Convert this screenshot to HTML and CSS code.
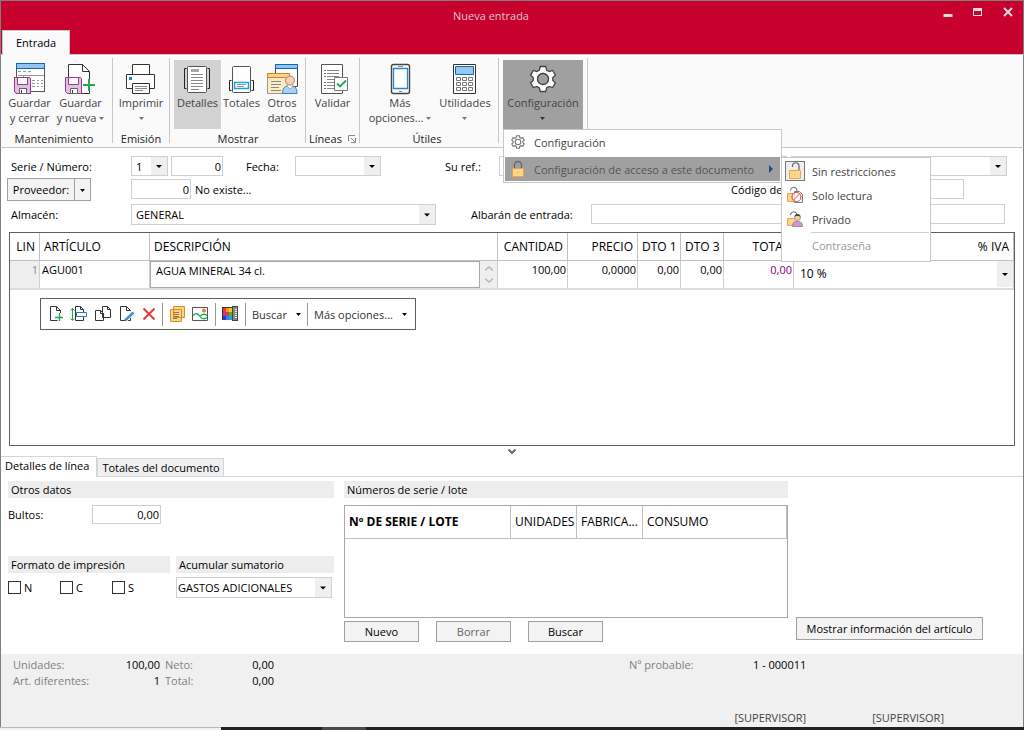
FILE: index.html
```html
<!DOCTYPE html>
<html lang="es">
<head>
<meta charset="utf-8">
<title>Nueva entrada</title>
<link rel="stylesheet" href="styles.css">
</head>
<body>
<svg class="defs" aria-hidden="true">
  <symbol id="disk" viewBox="0 0 17 17"><path d="M.5.5h15l1 1v15H2.5l-2-2z" fill="#e2bfdf" stroke="#943c93"/><path d="M3.5.5h10v7h-10z" fill="#fff" stroke="#943c93"/><path d="M5.500 11.500h7v5h-7z" fill="#fff" stroke="#666"/><path d="M7 13h1v3H7z" fill="#444"/></symbol>
  <symbol id="caret" viewBox="0 0 5 3"><path d="M0 0h5L2.500 3z" fill="currentColor"/></symbol>
  <symbol id="gear" viewBox="0 0 32 32"><path d="M13.300 3.500h5.400l.9 3.600 2.600 1.500 3.500-1.100 2.700 4.600-2.600 2.500v2.800l2.600 2.500-2.700 4.600-3.500-1.100-2.600 1.500-.9 3.600h-5.400l-.9-3.600-2.600-1.500-3.500 1.100-2.700-4.600 2.600-2.500v-2.800l-2.600-2.500 2.700-4.600 3.500 1.100 2.600-1.500z"/><circle cx="16" cy="16" r="5.500"/></symbol>
  <symbol id="lock" viewBox="0 0 16 18"><path d="M4.500 9V5a3.500 3.500 0 0 1 7 0V9" fill="none" stroke="#666" stroke-width="1.300"/><path d="M2.500 8.500h11v8h-11z" fill="#f8d98c" stroke="#eda04e"/><path d="M7.500 12h1v1h-1z" fill="#eda04e"/></symbol>
</svg>
<header class="titlebar">
  <h1 class="title">Nueva entrada</h1>
  <div class="tabs-top"><button class="tab-top">Entrada</button></div>
  <div class="winbuttons">
    <button class="winbtn" aria-label="Minimizar"><svg width="10" height="10"><path d="M.5 7h9v3h-9z" fill="#ddd"/></svg></button>
    <button class="winbtn" aria-label="Maximizar"><svg width="10" height="10" fill="none" stroke="#ddd" shape-rendering="crispEdges"><path d="M.5 1.500h8v7h-8zM0 2.500h9M0 3.500h9"/></svg></button>
    <button class="winbtn" aria-label="Cerrar"><svg width="10" height="10"><path d="M1 1l8 8M9 1L1 9" stroke="#ddd" stroke-width="2"/></svg></button>
  </div>
</header>

<nav class="ribbon" aria-label="Cinta">
  <section class="group">
    <div class="tools">
      <button class="tool w-save"><svg class="ico" viewBox="0 0 32 32" shape-rendering="crispEdges"><path d="M2.500.5h28v28h-28z" fill="#fff" stroke="#555"/><path d="M2.500.5h28v5h-28z" fill="#8fc5ee" stroke="#1467b0"/><path d="M4 8.500h3M9 8.500h3M14 8.500h3M4 12.500h26M18 17.500h3M23 17.500h2M27 17.500h2M18 20.500h3M23 20.500h2M27 20.500h2M18 23.500h3M23 23.500h2M27 23.500h2M9.500 12v3" stroke="#999" fill="none"/><use href="#disk" y="14" width="17" height="17"/></svg><span>Guardar<br>y cerrar</span></button>
      <button class="tool w-new"><svg class="ico" viewBox="0 0 32 32"><path d="M3.500 18V1.500h14l7 7V30.500H3.500" fill="#fff" stroke="#333"/><path d="M17.500 1.500v7h7" fill="none" stroke="#333"/><use href="#disk" y="14" width="17" height="17"/><path d="M18 22h12M24 16v12" stroke="#fafafa" stroke-width="5"/><path d="M18 22h12M24 16v12" stroke="#1fa950" stroke-width="2"/></svg><span>Guardar<br>y nueva <svg class="caret"><use href="#caret"/></svg></span></button>
    </div>
    <h2 class="glabel">Mantenimiento</h2>
  </section>
  <section class="group g-print">
    <div class="tools">
      <button class="tool w-print"><svg class="ico" viewBox="0 0 32 32" fill="#fff" stroke="#333"><path d="M7.500 13V1.500h17V13"/><path d="M1.500 11.500h28v14h-28z"/><path d="M4 14h3v3H4z" fill="#1883d0" stroke="none"/><path d="M7.500 20.500h17v10h-17z"/><path d="M10 23.500h12M10 25.500h12M10 27.500h8" stroke="#888"/></svg><span>Imprimir<br><svg class="caret"><use href="#caret"/></svg></span></button>
    </div>
    <h2 class="glabel">Emisión</h2>
  </section>
  <section class="group">
    <div class="tools">
      <button class="tool w-det pressed"><svg class="ico" viewBox="0 0 32 32" fill="none" stroke="#333"><path d="M4.500 5.500h-2v20h2M25.500 5.500h2v20h-2" stroke="#222"/><rect x="5.500" y="3.500" width="19" height="26" rx="1" fill="#fff" stroke="#555"/><path d="M9 6h8v3H9z" fill="#aaa" stroke="none"/><path d="M9 11.500h12M9 14.500h12M9 17.500h12M9 20.500h12M9 23.500h12M9 26.500h8" stroke="#888"/></svg><span>Detalles</span></button>
      <button class="tool w-tot"><svg class="ico" viewBox="0 0 32 32" fill="none"><path d="M5.500 17.500h-2v10h2M25.500 17.500h2v10h-2" stroke="#222"/><rect x="6.500" y="3.500" width="18" height="26" rx="1" fill="#fff" stroke="#555"/><path d="M8.500 19.500h14v6h-14z" fill="#fff" stroke="#18a0dc" stroke-width="1.500"/><path d="M11 21.500h9M11 23.500h7" stroke="#999"/></svg><span>Totales</span></button>
      <button class="tool w-oth"><svg class="ico" viewBox="0 0 32 32"><path d="M9.500 1.500h22v22h-22z" fill="#fff" stroke="#444"/><path d="M9.500 1.500h22v4h-22z" fill="#8fc5ee" stroke="#1467b0"/><path d="M1.500 10.500h22v20h-22z" fill="#fbecc4" stroke="#999"/><path d="M1.500 10.500h22v4h-22z" fill="#f9d48c" stroke="#e07c1f"/><path d="M5 18.500h10M5 21.500h10M5 24.500h8M5 27.500h10" stroke="#888"/><path d="M16.500 30.500c0-6 3-8 7.500-8s7 2 7 8z" fill="#a8d2ef" stroke="#3a7fb8"/><path d="M21 23l3 3 3-3-1-2h-4z" fill="#fff" stroke="#777" stroke-width=".6"/><circle cx="24" cy="17.500" r="4.500" fill="#f6d2b4" stroke="#b9805c"/></svg><span>Otros<br>datos</span></button>
    </div>
    <h2 class="glabel">Mostrar</h2>
  </section>
  <section class="group g-lines">
    <div class="tools">
      <button class="tool w-val"><svg class="ico" viewBox="0 0 32 32" fill="none"><path d="M4.500 1.500h21v29h-21z" fill="#fff" stroke="#555"/><path d="M10 7.500h12M10 10.500h12M10 13.500h12M10 16.500h8M10 19.500h7M10 22.500h7M10 25.500h7" stroke="#888"/><path d="M7 7.500h2M7 13.500h2M7 22.500h2" stroke="#1fa950"/><path d="M7 10.500h2M7 19.500h2M7 25.500h2" stroke="#e04040"/><path d="M17.500 14.500h13v13h-13z" fill="#fff" stroke="#777"/><path d="M20 20.500l3 3 6-6" stroke="#1fa950" stroke-width="1.800"/></svg><span>Validar</span></button>
    </div>
    <h2 class="glabel lines">Líneas <button class="launcher" aria-label="Más líneas"><svg width="8" height="8" fill="none" stroke="#888"><path d="M.5 6V.5H7M3 3l4 4M7.500 3v4.500H3"/></svg></button></h2>
  </section>
  <section class="group">
    <div class="tools">
      <button class="tool w-more"><svg class="ico" viewBox="0 0 32 32" fill="none"><rect x="7.500" y="1.500" width="18" height="29" rx="2" fill="#fff" stroke="#444" stroke-width="1.400"/><path d="M9.500 5.500h14v20h-14z" stroke="#2b86c8" stroke-width="1.300"/><path d="M14 3.500h5M15 28.500h3" stroke="#888"/></svg><span>Más<br>opciones... <svg class="caret"><use href="#caret"/></svg></span></button>
      <button class="tool w-util"><svg class="ico" viewBox="0 0 32 32" fill="none"><path d="M4.500 1.500h22v29h-22z" fill="#fff" stroke="#333"/><path d="M6.500 3.500h18v8h-18z" fill="#94c8ee" stroke="#1467b0"/><path d="M7.500 14.500h4v3h-4zM13.500 14.500h4v3h-4zM19.500 14.500h4v3h-4zM7.500 19.500h4v3h-4zM13.500 19.500h4v3h-4zM19.500 19.500h4v3h-4zM7.500 24.500h4v3h-4zM13.500 24.500h4v3h-4zM19.500 24.500h4v3h-4z" stroke="#777"/></svg><span>Utilidades<br><svg class="caret"><use href="#caret"/></svg></span></button>
    </div>
    <h2 class="glabel">Útiles</h2>
  </section>
  <section class="group g-conf">
    <div class="tools">
      <button class="tool w-conf open" aria-haspopup="menu"><svg class="ico" fill="#fff" stroke="#444" stroke-width="1.300"><use href="#gear"/><circle cx="16" cy="16" r="5.500" fill="#a0a0a0"/></svg><span>Configuración<br><svg class="caret"><use href="#caret"/></svg></span></button>
      <div class="menu" role="menu">
        <button class="mitem" role="menuitem"><svg class="mico" fill="none" stroke="#777" stroke-width="2.200"><use href="#gear"/></svg>Configuración</button>
        <div class="msub">
          <button class="mitem current" role="menuitem"><svg class="mico"><use href="#lock"/></svg>Configuración de acceso a este documento<svg class="marrow" width="4" height="8"><path d="M0 0l4 4-4 4z" fill="#1a4a8c"/></svg></button>
          <div class="submenu" role="menu">
            <button class="sitem" role="menuitem"><span class="sico chosen"><svg width="16" height="18"><path d="M5.500 5V4a3.200 3.200 0 0 1 6.500 0v5" fill="none" stroke="#666" stroke-width="1.200"/><path d="M2.500 8.500h11v8h-11z" fill="#f8d98c" stroke="#eda04e"/><path d="M7.500 12h1v1h-1z" fill="#eda04e"/></svg></span>Sin restricciones</button>
            <button class="sitem" role="menuitem"><span class="sico"><svg width="18" height="18"><path d="M4.500 4.500a3.200 3.200 0 0 1 6.500 0V8" fill="none" stroke="#666"/><path d="M1.500 7.500h9v8h-9z" fill="#f8d98c" stroke="#eda04e"/><path d="M8.500 5.500h5l3 3v8h-8z" fill="#fff" stroke="#777"/><circle cx="10.500" cy="11" r="4.500" fill="#fff" fill-opacity=".8" stroke="#d9534a" stroke-width="1.200"/><path d="M7.500 14l6-6" stroke="#d9534a"/></svg></span>Solo lectura</button>
            <button class="sitem" role="menuitem"><span class="sico"><svg width="18" height="18"><path d="M4.500 5a3.200 3.200 0 0 1 6.500 0v3" fill="none" stroke="#666"/><path d="M1.500 8.500h10v7h-10z" fill="#f8d98c" stroke="#eda04e"/><path d="M6.500 16.500c0-4 2-5 5-5s5 1 5 5z" fill="#c99bcb" stroke="#9a6a9e" stroke-width=".8"/><circle cx="11.500" cy="7.500" r="3" fill="#f3c9ab" stroke="#a97"/><path d="M8.500 7c0-4 6-4 6 0l-1.500-1h-3z" fill="#444"/></svg></span>Privado</button>
            <button class="sitem off" role="menuitem" disabled>Contraseña</button>
          </div>
        </div>
      </div>
    </div>
  </section>
</nav>

<main>
  <form class="form">
    <div class="row">
      <label class="first" for="serie">Serie / Número:</label>
      <select id="serie" class="field w-serie"><option>1</option></select>
      <input id="numero" class="field num w-numero" aria-label="Número" value="0">
      <label class="l-fecha" for="fecha">Fecha:</label>
      <select id="fecha" class="field w-fecha"><option></option></select>
      <label class="l-ref" for="ref">Su ref.:</label>
      <input id="ref" class="field w-ref">
      <select class="field w-rest" aria-label="Estado"><option></option></select>
    </div>
    <div class="row">
      <div class="first"><div class="split"><button type="button" class="btn">Proveedor:</button><button type="button" class="btn splitdrop" aria-label="Elegir"><svg class="caret dark"><use href="#caret"/></svg></button></div></div>
      <input class="field num w-prov" aria-label="Proveedor" value="0">
      <span class="noexiste">No existe...</span>
      <label class="l-cod" for="cod">Código de</label>
      <input id="cod" class="field w-cod">
    </div>
    <div class="row">
      <label class="first" for="alm">Almacén:</label>
      <select id="alm" class="field w-alm"><option>GENERAL</option></select>
      <label class="l-alb" for="alb">Albarán de entrada:</label>
      <input id="alb" class="field grow">
    </div>
  </form>

  <div class="gridbox">
    <table class="grid">
      <colgroup><col class="c30"><col class="c110"><col><col class="c70"><col class="c70"><col class="c43"><col class="c43"><col class="c70"><col class="c220"></colgroup>
      <thead><tr><th class="r">LIN</th><th>ARTÍCULO</th><th>DESCRIPCIÓN</th><th class="r">CANTIDAD</th><th class="r">PRECIO</th><th class="r">DTO 1</th><th class="r">DTO 3</th><th class="r">TOTAL</th><th class="r">% IVA</th></tr></thead>
      <tbody><tr>
        <td class="r lin">1</td><td>AGU001</td>
        <td class="desc"><div class="descbox"><input aria-label="Descripción" value="AGUA MINERAL 34 cl."><div class="spin"><svg width="8" height="5" fill="none" stroke="#b8b8b8" stroke-width="1.500"><path d="M0 4.500L4 1l4 3.500"/></svg><svg width="8" height="5" fill="none" stroke="#b8b8b8" stroke-width="1.500"><path d="M0 .5L4 4 8 .5"/></svg></div></div></td>
        <td class="r">100,00</td><td class="r">0,0000</td><td class="r">0,00</td><td class="r">0,00</td><td class="r total">0,00</td>
        <td class="iva"><select aria-label="% IVA"><option>10 %</option></select></td>
      </tr></tbody>
    </table>
    <div class="toolbar">
      <button class="tb" aria-label="Nueva"><svg width="16" height="18" fill="#fff" stroke="#333"><path d="M2.500 1.500h6l4 4v10h-10zM8.500 1.500v4h4"/><path d="M7 12h9M11.500 8v9" stroke="#fff" stroke-width="4"/><path d="M7 12.500h8M11.500 8v8" stroke="#1fa950" stroke-width="1.300"/></svg></button>
      <button class="tb" aria-label="Insertar"><svg width="18" height="18" fill="#fff" stroke="#333"><path d="M5.500 1.500h5l3 3v11h-8zM10.500 1.500v3h3"/><path d="M6.500 7.500h10v4h-10z" stroke="#2b78c0"/><path d="M2.500 3v12M.5 5.500l2-2 2 2M.5 13.500l2 2 2-2" fill="none" stroke="#1fa950"/></svg></button>
      <button class="tb" aria-label="Copiar"><svg width="18" height="18" fill="#fff" stroke="#333"><path d="M8.500 1.500h5l3 3v8h-8zM13.500 1.500v3h3M1.500 5.500h5l3 3v7h-8zM6.500 5.500v3h3"/></svg></button>
      <button class="tb" aria-label="Editar"><svg width="18" height="18" fill="#fff" stroke="#333"><path d="M2.500 1.500h6l4 4v10h-10zM8.500 1.500v4h4"/><path d="M7 15l8-8" stroke="#fff" stroke-width="5"/><path d="M7 15.500l8.500-8" stroke="#3b8fd4" stroke-width="2.500"/></svg></button>
      <button class="tb" aria-label="Borrar línea"><svg width="14" height="18"><path d="M1.500 3.500l11 11M12.500 3.500l-11 11" stroke="#e83a3a" stroke-width="2"/></svg></button>
      <i class="tsep"></i>
      <button class="tb" aria-label="Notas"><svg width="17" height="18" fill="#f9d48c" stroke="#e08a2c"><path d="M4.500 1.500h11v11h-11zM1.500 4.500h11v12h-11z"/><path d="M4 7.500h6M4 9.500h6M4 11.500h6M4 13.500h4" stroke="#957a45"/></svg></button>
      <button class="tb" aria-label="Imagen"><svg width="17" height="18" fill="#fff" stroke="#555"><path d="M.5 2.500h15v13H.5z"/><path d="M1 10.500c3-3 5-2 7 1s4 3 7 1M8 11.500c2-3 4-3 7-1" fill="none" stroke="#1fa950" stroke-width="1.300"/><circle cx="12" cy="5.500" r="1.500" fill="#f0884a" stroke="#d96a2c"/></svg></button>
      <i class="tsep"></i>
      <button class="tb" aria-label="Colores"><svg width="17" height="18" shape-rendering="crispEdges"><path d="M0 2h12v13H0z" fill="#333"/><path d="M1 3h3v4H1z" fill="#f33"/><path d="M4 3h3v4H4z" fill="#f90"/><path d="M7 3h3v4H7z" fill="#fc0"/><path d="M1 7h3v4H1z" fill="#b3c"/><path d="M4 7h3v4H4z" fill="#e33"/><path d="M7 7h3v4H7z" fill="#3b4"/><path d="M1 11h3v4H1z" fill="#33d"/><path d="M4 11h3v4H4z" fill="#38e"/><path d="M7 11h3v4H7z" fill="#2ac"/><path d="M10.500 1.500h5v14h-5z" fill="#888" stroke="#444"/><path d="M13 4h2M13 6h2M13 8h2M13 10h2M13 12h2" stroke="#eee"/></svg></button>
      <i class="tsep"></i>
      <button class="tb text">Buscar <svg class="caret dark"><use href="#caret"/></svg></button>
      <i class="tsep"></i>
      <button class="tb text last">Más opciones... <svg class="caret dark"><use href="#caret"/></svg></button>
    </div>
  </div>
  <button class="splitter" aria-label="Contraer"><svg width="8" height="5" fill="none" stroke="#666" stroke-width="2"><path d="M.5.5L4 4 7.500.5"/></svg></button>

  <div class="tabs"><button class="tab on">Detalles de línea</button><button class="tab">Totales del documento</button></div>
  <div class="panels">
    <section class="left">
      <h3 class="bar">Otros datos</h3>
      <div class="bultos"><label for="bultos">Bultos:</label><input id="bultos" class="field num" value="0,00"></div>
      <div class="two">
        <div><h3 class="bar">Formato de impresión</h3><div class="checks"><label><input type="checkbox">N</label><label><input type="checkbox">C</label><label><input type="checkbox">S</label></div></div>
        <div><h3 class="bar">Acumular sumatorio</h3><select class="acum" aria-label="Acumular sumatorio"><option>GASTOS ADICIONALES</option></select></div>
      </div>
    </section>
    <section class="mid">
      <h3 class="bar">Números de serie / lote</h3>
      <div class="lotbox"><table class="lots"><colgroup><col class="c166"><col class="c66"><col class="c66"><col></colgroup><thead><tr><th class="bold">Nº DE SERIE / LOTE</th><th>UNIDADES</th><th>FABRICA...</th><th>CONSUMO</th></tr></thead></table></div>
      <div class="btns"><button class="btn">Nuevo</button><button class="btn" disabled>Borrar</button><button class="btn">Buscar</button></div>
    </section>
    <section class="right"><button class="btn info">Mostrar información del artículo</button></section>
  </div>
</main>

<footer class="status">
  <dl class="sums"><dt>Unidades:</dt><dd>100,00</dd><dt>Neto:</dt><dd>0,00</dd><dt>Art. diferentes:</dt><dd>1</dd><dt>Total:</dt><dd>0,00</dd></dl>
  <dl class="prob"><dt>Nº probable:</dt><dd>1 - 000011</dd></dl>
  <div class="users"><span>[SUPERVISOR]</span><span>[SUPERVISOR]</span></div>
</footer>
<div class="taskbar"><i class="t1"></i><i class="t2"></i><i class="t3"></i><i class="t4"></i></div>
</body>
</html>
```
FILE: styles.css
```css
* { box-sizing: border-box; }
body {
  margin: 0;
  min-height: 100vh;
  display: flex;
  flex-direction: column;
  font: 11px/15px "Open Sans", "Noto Sans", sans-serif;
  color: #000;
  background: #fff;
}
button, input, select { font: inherit; color: inherit; margin: 0; border-radius: 0; }
button { border: 0; background: none; padding: 0; white-space: nowrap; }
h1, h2, h3, dl, dd { margin: 0; font: inherit; }
svg { flex: none; }
.defs { position: absolute; width: 0; height: 0; }
.caret { width: 5px; height: 3px; color: #777; vertical-align: 2px; }
.caret.dark { color: #000; }

.titlebar {
  height: 54px;
  flex: none;
  display: grid;
  grid-template-columns: 1fr auto 1fr;
  grid-template-rows: 28px 25px;
  background: #c8002d;
  border: 1px solid #7f7f7f;
  border-bottom: 0;
}
.title { grid-column: 2; grid-row: 1; align-self: center; color: #dfc5ca; padding-right: 42px; }
.tabs-top { grid-column: 1; grid-row: 2; display: flex; align-items: stretch; padding: 1px 0 0 1px; }
.tab-top { width: 68px; height: 25px; padding-bottom: 2px; background: #fafafa; border: 1px solid #c8c8c8; border-bottom: 0; z-index: 1; }
.winbuttons { grid-column: 3; grid-row: 1; justify-self: end; display: flex; gap: 20px; padding: 6px 10px 0 0; }
.winbtn { display: flex; height: 10px; }

.ribbon {
  display: flex;
  flex: none;
  height: 94px;
  background: #fafafa;
  border: 1px solid #7f7f7f;
  border-top-color: #c8c8c8;
  border-bottom-color: #c8c8c8;
}
.group { display: flex; flex-direction: column; height: 85px; margin-top: 3px; padding: 2px 7px 0 2px; border-right: 1px solid #c8c8c8; }
.tools { display: flex; flex: none; height: 69px; position: relative; }
.group:nth-of-type(3) { padding: 2px 3px 0 4px; }
.g-print, .g-lines { padding: 2px 0 0; }
.g-conf { padding: 2px 4px 0; }
.group:nth-of-type(5) { padding: 2px 6px 0 2px; }
.tool { display: flex; flex-direction: column; align-items: center; padding-top: 3px; color: #444; text-align: center; }
.ico { width: 32px; height: 32px; }
.glabel { flex: none; text-align: center; margin-top: 2px; color: #222; }
.lines { display: flex; align-items: center; justify-content: center; gap: 6px; }
.launcher { display: flex; }
.w-save { width: 53px; }
.w-new { width: 49px; }
.w-print { width: 56px; }
.w-det { width: 47px; }
.w-tot { width: 41px; }
.w-oth { width: 40px; }
.w-val { width: 53px; }
.w-more { width: 76px; }
.w-util { width: 54px; }
.w-conf { width: 80px; }
.pressed { background: #d2d2d2; }
.open { background: #a0a0a0; }
.open .caret { color: #333; }

.menu { position: absolute; z-index: 5; top: 69px; left: 0; width: 279px; padding: 0 1px 1px; background: #fff; border: 1px solid #c8c8c8; color: #444; }
.mitem { display: flex; align-items: center; width: 100%; height: 24px; padding-left: 5px; }
.mico { width: 16px; height: 18px; margin-right: 8px; }
.msub { position: relative; margin-top: 3px; }
.current { background: #a0a0a0; color: #555; }
.marrow { margin: 0 7px 0 auto; }
.submenu { position: absolute; top: 0; left: 276px; width: 150px; padding: 1px 1px 4px 3px; background: #fff; border: 1px solid #c8c8c8; }
.sitem { display: flex; align-items: center; width: 100%; height: 24px; }
.sico { display: flex; justify-content: center; align-items: center; width: 20px; height: 20px; margin-right: 7px; }
.chosen { background: #eee; border: 1px solid #777; }
.off { color: #999; margin: 1px 0 0 26px; border-top: 1px solid #d0d0d0; height: 25px; width: calc(100% - 26px); padding-left: 1px; }

main { flex: 1; display: flex; flex-direction: column; border: solid #7f7f7f; border-width: 0 1px; }
.form { padding: 7px 8px 0 6px; display: grid; gap: 1px; }
.row { display: flex; align-items: center; height: 22px; }
.row:nth-child(3) { height: 28px; margin-top: -1px; }
.first { width: 124px; padding-left: 4px; flex: none; }
div.first { padding-left: 0; }
.field { height: 20px; border: 1px solid #d0d0d0; background-color: #fff; padding: 0 4px; min-width: 0; }
.num { text-align: right; padding-right: 1px; }
select {
  appearance: none;
  outline: 0;
  background: url("data:image/svg+xml,%3Csvg xmlns='http://www.w3.org/2000/svg' width='16' height='30'%3E%3Cpath d='M0 0h16v30H0z' fill='%23efefef'/%3E%3Cpath d='M5 14h6l-3 3z'/%3E%3C/svg%3E") right center no-repeat #fff;
}
.w-serie { width: 37px; margin-right: 3px; }
.w-numero { width: 52px; }
.l-fecha { margin-left: 23px; width: 49px; }
.w-fecha { width: 86px; }
.l-ref { margin-left: 64px; width: 54px; }
.w-ref { flex: 1; }
.w-rest { width: 216px; margin: 0 8px 0 4px; }
.split { display: flex; }
.btn { height: 21px; border: 1px solid #a0a0a0; background: #f3f3f3; }
.split .btn { height: 23px; width: 68px; }
.split .splitdrop { width: 17px; margin-left: -1px; }
.w-prov { width: 60px; }
.noexiste { margin-left: 4px; }
.l-cod { margin-left: auto; width: 109px; }
.w-cod { width: 120px; margin: 0 51px 0 4px; }
.w-alm { width: 305px; height: 21px; }
.l-alb { margin-left: 35px; width: 120px; }
.grow { flex: 1; margin-right: 10px; }

.gridbox { flex: 1; min-height: 200px; margin: 4px 8px 0; border: 1px solid #606060; }
table { border-collapse: separate; border-spacing: 0; table-layout: fixed; width: 100%; }
.c30 { width: 30px; } .c110 { width: 110px; } .c70 { width: 70px; } .c43 { width: 43px; }
.c220 { width: 220px; } .c166 { width: 166px; } .c66 { width: 66px; }
th { font-weight: 400; text-align: left; border-right: 1px solid #c0c0c0; border-bottom: 1px solid #c0c0c0; padding: 0 4px; white-space: nowrap; overflow: hidden; }
.grid, .lots { font-size: 12px; line-height: 16px; }
.grid th { height: 28px; }
.grid .r { text-align: right; }
.grid td { height: 28px; padding: 0 1px 0 2px; vertical-align: top; border-right: 1px solid #d0d0d0; border-bottom: 2px solid #ddd; font-size: 11px; line-height: 18px; }
.grid .lin { background: #efefef; color: #888; }
.grid .total { color: #800080; }
.grid .desc { padding: 0; }
.descbox { display: flex; height: 27px; background: #efefef; }
.descbox input { flex: 1; min-width: 0; border: 1px solid #a8a8a8; background: #fff; padding: 0 5px 8px; }
.spin { width: 17px; display: flex; flex-direction: column; align-items: center; justify-content: space-around; padding: 2px 0; }
.grid .iva { padding: 0; }
.iva select { display: block; width: 100%; height: 26px; border: 0; padding: 0 6px; font-size: 12px; }
.toolbar { display: inline-flex; align-items: center; height: 32px; margin: 8px 0 0 30px; padding-left: 7px; border: 1px solid #606060; gap: 6px; color: #333; }
.tb { display: flex; align-items: center; height: 20px; }
.tb.text { gap: 9px; }
.last { padding-right: 8px; }
.tsep { width: 1px; height: 23px; background: #999; }
.splitter { height: 10px; display: flex; justify-content: center; align-items: center; }

.tabs { display: flex; align-items: flex-end; border-bottom: 1px solid #d5d5d5; height: 21px; }
.tab { height: 18px; padding: 0 3px 0 4px; background: #f0f0f0; border: 1px solid #d5d5d5; border-bottom: 0; }
.tab.on { height: 21px; background: #fff; border-left: 0; margin-bottom: -1px; padding: 0 7px 3px 4px; }
.panels { display: grid; grid-template-columns: 328fr 444fr 220fr; gap: 8px; padding: 4px 7px 12px; }
.left { padding-right: 2px; }
.bar { background: #ededed; height: 17px; line-height: 17px; padding-left: 3px; }
.bultos { display: flex; align-items: center; margin: 7px 0 32px; }
.bultos label { width: 84px; }
.bultos .field { width: 69px; height: 19px; }
.two { display: grid; grid-template-columns: 162fr 158fr; gap: 6px; }
.checks { display: flex; padding-top: 7px; }
.checks label { display: flex; align-items: center; gap: 3px; width: 52px; }
.checks input { appearance: none; width: 13px; height: 13px; border: 1px solid #333; background: #fff; }
.acum { display: block; width: 156px; height: 21px; margin-top: 4px; border: 1px solid #d0d0d0; padding: 0 1px; }
.lotbox { height: 113px; margin: 7px 0 3px; border: 1px solid #a8a8a8; }
.lots th { height: 33px; }
.lots .bold { font-weight: 700; }
.btns { display: flex; gap: 17px; }
.btns .btn { width: 75px; }
.btn:disabled { color: #666; }
.right { padding-top: 136px; }
.info { width: 187px; height: 23px; }

.status { display: grid; grid-template-columns: 616px 1fr; align-content: space-between; flex: none; height: 73px; background: #f0f0f0; border: solid #7f7f7f; border-width: 0 1px; padding: 3px 79px 2px 12px; }
.sums { display: grid; grid-template-columns: 80px 67px 60px 54px; line-height: 16px; }
.sums dt:nth-of-type(even) { padding-left: 5px; }
dt { color: #808080; }
.sums dd { text-align: right; }
.prob { display: flex; line-height: 16px; }
.prob dt { width: 124px; }
.users { grid-column: 1 / 3; display: flex; justify-content: flex-end; gap: 66px; color: #444; }
.taskbar { display: flex; height: 3px; flex: none; background: #202020; }
.t1 { width: 221px; background: #f0f0f0; border-top: 1px solid #b8b8b8; }
.t2 { width: 101px; }
.t3 { width: 44px; background: #4a4a4a; }
.t4 { flex: 1; }
```
